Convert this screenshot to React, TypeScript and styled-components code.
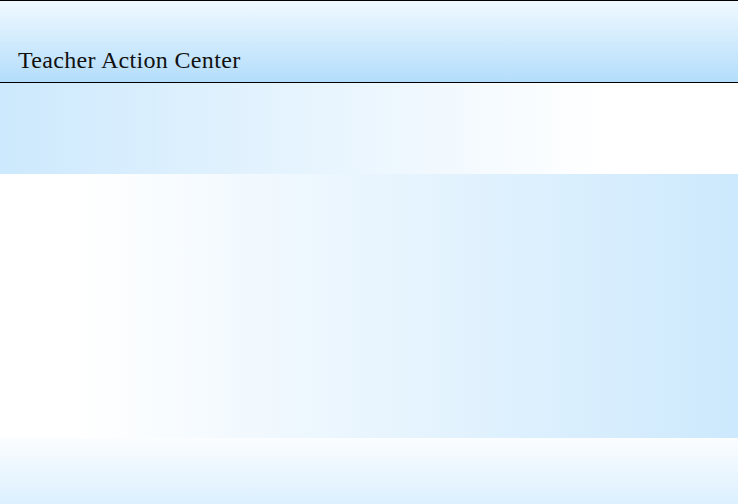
import React from "react";
import styled, { createGlobalStyle } from "styled-components";

const GlobalStyle = createGlobalStyle`
  html, body { margin: 0; padding: 0; height: 100%; }
  body { font-family: "Liberation Serif", "Times New Roman", serif; background: #ffffff; }
  #root { height: 100%; }
`;

const Page = styled.div`
  display: flex;
  flex-direction: column;
  height: 100vh;
  overflow: hidden;
`;

const Header = styled.header`
  border-top: 1px solid #000;
  border-bottom: 1px solid #000;
  padding: 47px 18px 10px;
  background: linear-gradient(to bottom, #f0f9ff 0%, #b3ddfb 100%);
`;

const Title = styled.h1`
  margin: 0;
  font-family: "Liberation Serif", "Times New Roman", serif;
  font-weight: normal;
  font-size: 24px;
  line-height: 24px;
  letter-spacing: 0.33px;
  color: #111;
`;

const Band = styled.section<{ $h: number; $dir: "left" | "right"; $white: number }>`
  height: ${(p) => p.$h}px;
  flex: none;
  background: linear-gradient(
    to ${(p) => p.$dir},
    #cde9fd 0%,
    #ffffff ${(p) => p.$white}%
  );
`;

const Footer = styled.footer`
  flex: 1;
  background: linear-gradient(to bottom, #fbfdff 0%, #dcf0fe 100%);
`;

export default function App() {
  return (
    <>
      <GlobalStyle />
      <Page>
        <Header>
          <Title>Teacher Action Center</Title>
        </Header>
        <Band $h={91} $dir="right" $white={82} />
        <Band $h={264} $dir="left" $white={90} />
        <Footer />
      </Page>
    </>
  );
}
